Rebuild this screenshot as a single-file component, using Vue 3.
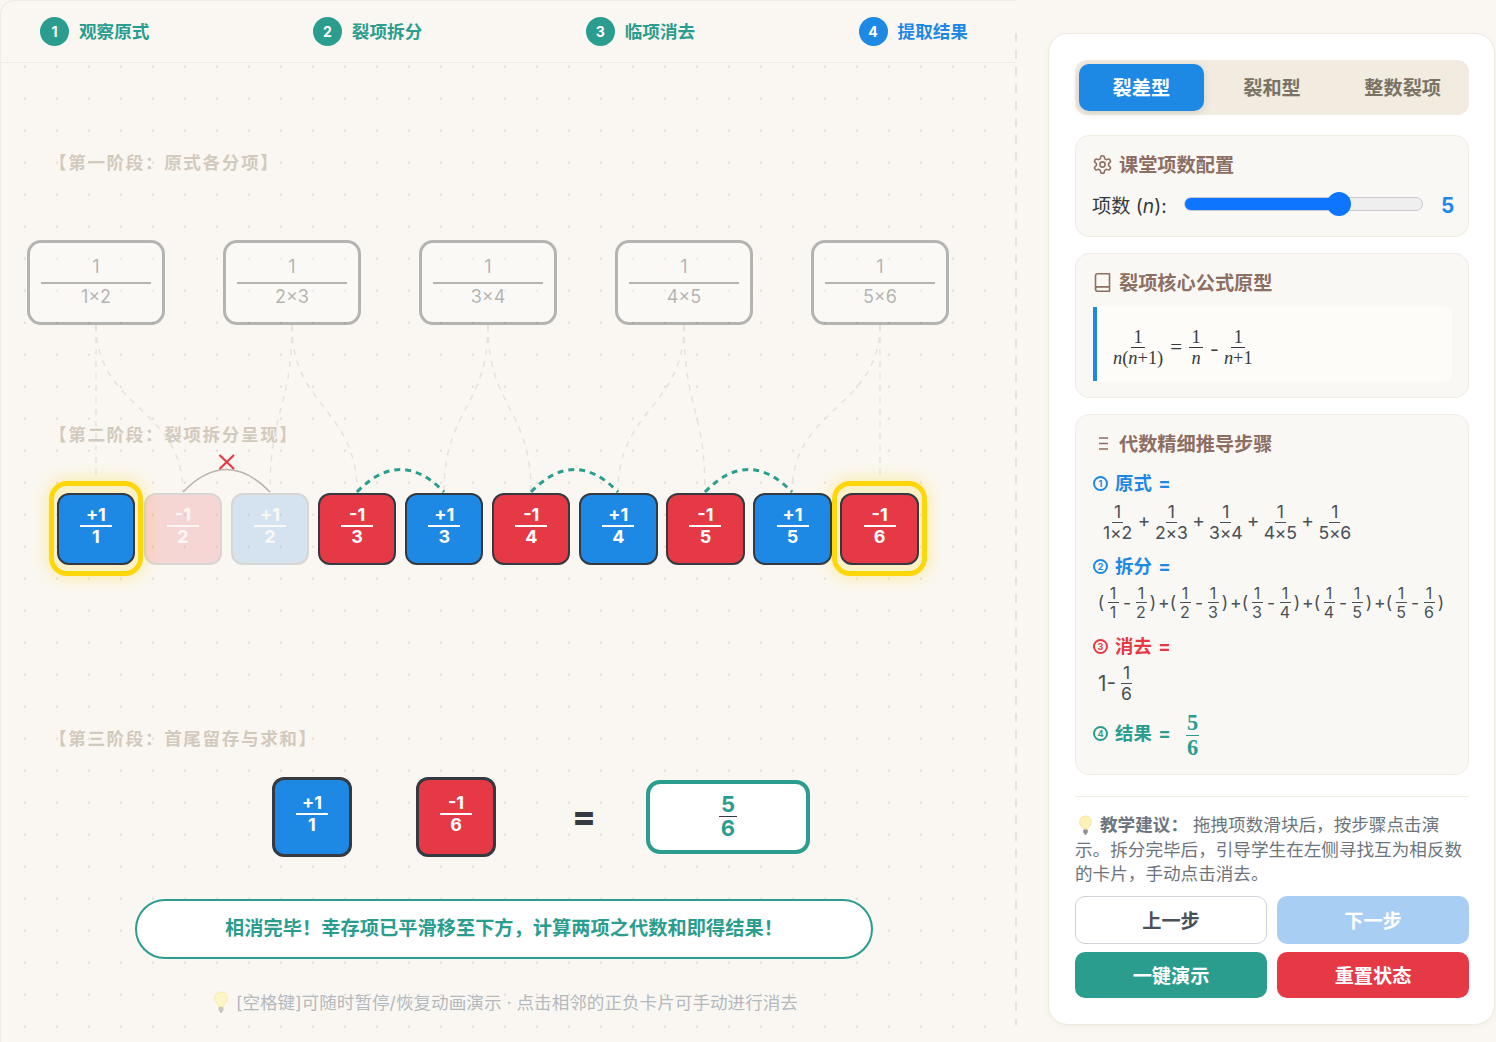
<script setup>
import { ref, computed } from 'vue'

const steps = [
  { n: 1, label: '观察原式' },
  { n: 2, label: '裂项拆分' },
  { n: 3, label: '临项消去' },
  { n: 4, label: '提取结果', current: true }
]
const terms = ['1×2', '2×3', '3×4', '4×5', '5×6']
const cards = [
  { s: '+1', d: 1, kind: 'pos', keep: true },
  { s: '-1', d: 2, kind: 'neg', faded: true },
  { s: '+1', d: 2, kind: 'pos', faded: true },
  { s: '-1', d: 3, kind: 'neg' },
  { s: '+1', d: 3, kind: 'pos' },
  { s: '-1', d: 4, kind: 'neg' },
  { s: '+1', d: 4, kind: 'pos' },
  { s: '-1', d: 5, kind: 'neg' },
  { s: '+1', d: 5, kind: 'pos' },
  { s: '-1', d: 6, kind: 'neg', keep: true }
]
const pairs = [[1, 2], [2, 3], [3, 4], [4, 5], [5, 6]]
const tabs = ['裂差型', '裂和型', '整数裂项']

const thinLines = [
  'M96 325 V492',
  'M96 325 C96 408 183 408 183 492',
  'M292 325 C292 408 270 408 270 492',
  'M292 325 C292 408 357 408 357 492',
  'M488 325 C488 408 444 408 444 492',
  'M488 325 C488 408 531 408 531 492',
  'M684 325 C684 408 618 408 618 492',
  'M684 325 C684 408 705 408 705 492',
  'M880 325 C880 408 792 408 792 492',
  'M880 325 V492'
]
const tealArcs = [
  'M357 492 Q400.500 447 444 492',
  'M531 492 Q574.500 447 618 492',
  'M705 492 Q748.500 447 792 492'
]

const n = ref(5)
const fill = computed(() => 12 + 215 * ((n.value - 3) / 3) + 'px')
</script>

<template>
  <div class="app">
    <main class="stage">
      <nav class="stepper">
        <div v-for="s in steps" :key="s.n" class="step" :class="{ current: s.current }">
          <span class="dot">{{ s.n }}</span>
          <span class="step-label">{{ s.label }}</span>
        </div>
      </nav>

      <section class="canvas">
        <svg class="wires" viewBox="0 0 1016 1042" width="1016" height="1042" fill="none">
          <path v-for="d in thinLines" :key="d" :d="d" stroke="#e7e2d9" stroke-width="1.500" stroke-dasharray="6 6" />
          <path d="M183 492 Q226.500 447 270 492" stroke="#bab4a9" stroke-width="1.500" />
          <path d="M219.500 455 L234 469 M234 455 L219.500 469" stroke="#e63946" stroke-width="2.200" />
          <path v-for="d in tealArcs" :key="d" :d="d" stroke="#2a9d8f" stroke-width="3" stroke-dasharray="6 5" />
        </svg>

        <h3 class="phase first">【第一阶段：原式各分项】</h3>
        <div class="origin-row">
          <div v-for="t in terms" :key="t" class="origin-card">
            <span class="o-num">1</span>
            <i class="o-bar"></i>
            <span class="o-den">{{ t }}</span>
          </div>
        </div>

        <h3 class="phase second">【第二阶段：裂项拆分呈现】</h3>
        <div class="split-row">
          <div
            v-for="(c, i) in cards"
            :key="i"
            class="term"
            :class="[c.kind, { keep: c.keep }]"
          >
            <div class="term-body" :class="{ faded: c.faded }">
              <span>{{ c.s }}</span>
              <i></i>
              <span>{{ c.d }}</span>
            </div>
          </div>
        </div>

        <h3 class="phase third">【第三阶段：首尾留存与求和】</h3>
        <div class="sum-row">
          <div class="term big pos">
            <div class="term-body"><span>+1</span><i></i><span>1</span></div>
          </div>
          <div class="term big neg">
            <div class="term-body"><span>-1</span><i></i><span>6</span></div>
          </div>
          <div class="equals">=</div>
          <div class="result">
            <span>5</span>
            <i></i>
            <span>6</span>
          </div>
        </div>

        <div class="message">相消完毕！幸存项已平滑移至下方，计算两项之代数和即得结果！</div>

        <div class="hint">
          <svg class="bulb" viewBox="0 0 16 22" width="16" height="22">
            <path d="M8 1a6.500 6.500 0 0 0-4 11.600c1 .9 1.500 1.900 1.500 3h5c0-1.100.5-2.100 1.500-3A6.500 6.500 0 0 0 8 1z" fill="#fdf5c8" stroke="#f8e9a6" stroke-width=".9" />
            <rect x="5.500" y="16" width="5" height="4" rx="1" fill="#c9c9c4" />
            <rect x="6.500" y="20" width="3" height="1.500" rx=".7" fill="#b5b5b0" />
          </svg>
          <span>[空格键]可随时暂停/恢复动画演示 · 点击相邻的正负卡片可手动进行消去</span>
        </div>
      </section>
    </main>

    <aside class="panel">
      <div class="tabs">
        <button v-for="(t, i) in tabs" :key="t" class="tab" :class="{ active: i === 0 }">{{ t }}</button>
      </div>

      <section class="box config">
        <h4 class="box-title">
          <svg class="ico" viewBox="0 0 24 24" width="21" height="21" fill="none" stroke="#8d6e63" stroke-width="1.800" stroke-linecap="round" stroke-linejoin="round">
            <path d="M12.220 2h-.44a2 2 0 0 0-2 2v.18a2 2 0 0 1-1 1.730l-.43.25a2 2 0 0 1-2 0l-.15-.08a2 2 0 0 0-2.730.73l-.22.38a2 2 0 0 0 .73 2.730l.15.1a2 2 0 0 1 1 1.720v.51a2 2 0 0 1-1 1.740l-.15.09a2 2 0 0 0-.73 2.730l.22.38a2 2 0 0 0 2.730.73l.15-.08a2 2 0 0 1 2 0l.43.25a2 2 0 0 1 1 1.730V20a2 2 0 0 0 2 2h.44a2 2 0 0 0 2-2v-.18a2 2 0 0 1 1-1.730l.43-.25a2 2 0 0 1 2 0l.15.08a2 2 0 0 0 2.730-.73l.22-.39a2 2 0 0 0-.73-2.730l-.15-.08a2 2 0 0 1-1-1.740v-.5a2 2 0 0 1 1-1.740l.15-.09a2 2 0 0 0 .73-2.730l-.22-.38a2 2 0 0 0-2.730-.73l-.15.08a2 2 0 0 1-2 0l-.43-.25a2 2 0 0 1-1-1.730V4a2 2 0 0 0-2-2z" />
            <circle cx="12" cy="12" r="3" />
          </svg>
          <span>课堂项数配置</span>
        </h4>
        <div class="slider-row">
          <label class="slider-label">项数 (<em>n</em>):</label>
          <input v-model.number="n" class="slider" type="range" min="3" max="6" step="1" :style="{ '--fill': fill }" />
          <span class="slider-value">{{ n }}</span>
        </div>
      </section>

      <section class="box proto">
        <h4 class="box-title">
          <svg class="ico" viewBox="0 0 24 24" width="21" height="21" fill="none" stroke="#8d6e63" stroke-width="1.800" stroke-linecap="round" stroke-linejoin="round">
            <path d="M4 19.500v-15A2.500 2.500 0 0 1 6.500 2H20v20H6.500a2.500 2.500 0 0 1 0-5H20" />
          </svg>
          <span>裂项核心公式原型</span>
        </h4>
        <div class="formula">
          <span class="sf"><span>1</span><i></i><span><em>n</em>(<em>n</em>+1)</span></span>
          <span class="op eq">=</span>
          <span class="sf"><span>1</span><i></i><span><em>n</em></span></span>
          <span class="op minus">-</span>
          <span class="sf"><span>1</span><i></i><span><em>n</em>+1</span></span>
        </div>
      </section>

      <section class="box derive">
        <h4 class="box-title">
          <svg class="ico" viewBox="0 0 21 21" width="21" height="21" fill="none" stroke="#8d6e63" stroke-width="1.500">
            <path d="M7 5h9M7 10.500h9M7 16h9" />
          </svg>
          <span>代数精细推导步骤</span>
        </h4>

        <div class="d-head blue"><span class="cn">1</span>原式 =</div>
        <div class="d-origin">
          <template v-for="(t, i) in terms" :key="t">
            <span v-if="i" class="plus">+</span>
            <span class="mf wide"><span>1</span><i></i><span>{{ t }}</span></span>
          </template>
        </div>

        <div class="d-head blue second-head"><span class="cn">2</span>拆分 =</div>
        <div class="d-split">
          <template v-for="(p, i) in pairs" :key="i">
            <span v-if="i" class="sp-plus">+</span>
            <span class="paren">(</span>
            <span class="mf small"><span>1</span><i></i><span>{{ p[0] }}</span></span>
            <span class="sp-minus">-</span>
            <span class="mf small"><span>1</span><i></i><span>{{ p[1] }}</span></span>
            <span class="paren">)</span>
          </template>
        </div>

        <div class="d-head red third-head"><span class="cn">3</span>消去 =</div>
        <div class="d-cancel">
          <span class="lead">1-</span>
          <span class="mf"><span>1</span><i></i><span>6</span></span>
        </div>

        <div class="d-result">
          <div class="d-head teal"><span class="cn">4</span>结果 =</div>
          <span class="rf"><span>5</span><i></i><span>6</span></span>
        </div>
      </section>

      <div class="advice">
        <svg class="bulb in-text" viewBox="0 0 16 22" width="15" height="20">
          <path d="M8 1a6.500 6.500 0 0 0-4 11.600c1 .9 1.500 1.900 1.500 3h5c0-1.100.5-2.100 1.500-3A6.500 6.500 0 0 0 8 1z" fill="#fdf2b8" stroke="#f8e28e" stroke-width=".9" />
          <rect x="5.500" y="16" width="5" height="4" rx="1" fill="#8f918f" />
          <rect x="6.500" y="20" width="3" height="1.500" rx=".7" fill="#777" />
        </svg>
        <strong>教学建议：</strong> 拖拽项数滑块后，按步骤点击演示。拆分完毕后，引导学生在左侧寻找互为相反数的卡片，手动点击消去。
      </div>

      <div class="actions">
        <button class="btn ghost">上一步</button>
        <button class="btn next">下一步</button>
        <button class="btn run">一键演示</button>
        <button class="btn reset">重置状态</button>
      </div>
    </aside>
  </div>
</template>

<style scoped>
.app {
  display: flex;
  width: 1496px;
  height: 1042px;
  overflow: hidden;
  background: #faf7f2;
  font-family: Inter, "Noto Sans CJK SC", sans-serif;
  color: #343a40;
}

/* ---------- left stage ---------- */
.stage {
  position: relative;
  width: 1016px;
  flex: none;
  border-radius: 14px 0 0 0;
  box-shadow: inset 1px 1px 0 #f0ece4;
}
.stage::after {
  content: "";
  position: absolute;
  top: 33px;
  bottom: 17px;
  right: -1px;
  width: 2px;
  background: repeating-linear-gradient(to bottom, #e8e2d8 0 9px, transparent 9px 17px);
}
.stepper {
  display: flex;
  justify-content: space-between;
  align-items: center;
  box-sizing: border-box;
  height: 63px;
  padding: 0 48px 0 40px;
  border-bottom: 1px solid #f0ece4;
}
.step {
  display: flex;
  align-items: center;
  gap: 10px;
  color: #2a9d8f;
}
.step.current { color: #1e88e5; }
.dot {
  display: flex;
  align-items: center;
  justify-content: center;
  width: 29px;
  height: 29px;
  border-radius: 50%;
  color: #fff;
  background: #2a9d8f;
  font-size: 14px;
  font-weight: 700;
}
.step.current .dot { background: #1e88e5; }
.step-label { padding-top: 2px; font-size: 17.600px; font-weight: 700; line-height: 24px; }

.canvas {
  position: relative;
  height: 979px;
  background-image: radial-gradient(circle, #e5dfd5 1.200px, transparent 1.600px);
  background-size: 32px 32px;
  background-position: 9px -12.300px;
}
.wires {
  position: absolute;
  left: 0;
  top: -63px;
  pointer-events: none;
}
.phase {
  margin: 0 0 0 49px;
  font-size: 17.600px;
  line-height: 24px;
  font-weight: 700;
  letter-spacing: 1.600px;
  color: #d2cabe;
}
.phase.first { padding-top: 88px; }
.phase.second { margin-top: 98px; }
.phase.third { margin-top: 162px; }

.origin-row {
  display: flex;
  gap: 57.400px;
  margin: 65px 0 0 26.700px;
}
.origin-card {
  position: relative;
  display: flex;
  flex-direction: column;
  align-items: center;
  justify-content: center;
  box-sizing: border-box;
  width: 138.600px;
  height: 85px;
  padding-bottom: 2px;
  border: 3.500px solid #343a40;
  border-radius: 14px;
  background: #fff;
  opacity: .35;
  font-size: 18px;
  color: #343a40;
}
.o-num { line-height: 24px; margin-bottom: 3px; }
.o-bar { display: block; flex: none; width: 110px; height: 2px; background: #343a40; }
.o-den { line-height: 24px; margin-top: 1px; }

.split-row {
  position: relative;
  z-index: 1;
  isolation: isolate;
  display: flex;
  gap: 8.700px;
  margin: 45.700px 0 0 56.700px;
}
.term {
  position: relative;
  width: 78.400px;
  height: 72.300px;
  flex: none;
}
.term.big { width: 80px; height: 80px; }
.term-body {
  display: flex;
  flex-direction: column;
  align-items: center;
  justify-content: center;
  box-sizing: border-box;
  width: 100%;
  height: 100%;
  padding-bottom: 6px;
  border: 2.500px solid #343a40;
  border-radius: 12px;
  color: #fff;
  font-size: 18px;
  font-weight: 700;
}
.term.big .term-body { border-width: 3px; }
.term-body span { line-height: 20px; }
.term-body i { display: block; width: 32px; height: 2px; background: #fff; }
.term.pos .term-body { background: #1e88e5; }
.term.neg .term-body { background: #e63946; }
.term-body.faded { opacity: .17; }
.term.keep::after {
  content: "";
  position: absolute;
  left: -8px;
  right: -8px;
  top: -11.500px;
  bottom: -11px;
  box-sizing: border-box;
  border: 5px solid #ffd60a;
  border-radius: 18px;
  background: rgba(255, 214, 10, .18);
  box-shadow: 0 0 18px rgba(255, 214, 10, .4);
  z-index: -1;
}

.sum-row {
  position: relative;
  display: flex;
  align-items: center;
  margin: 26px 0 0 272px;
}
.sum-row .term { margin-right: 64px; }
.sum-row .term:nth-child(2) { margin-right: 76px; }
.equals {
  width: 20px;
  margin-right: 54px;
  padding-bottom: 2px;
  font-size: 35px;
  font-weight: 800;
  line-height: 40px;
  text-align: center;
}
.result {
  display: flex;
  flex-direction: column;
  align-items: center;
  justify-content: center;
  box-sizing: border-box;
  width: 164px;
  height: 74px;
  border: 4px solid #2a9d8f;
  border-radius: 14px;
  background: #fff;
  color: #2a9d8f;
  font-size: 22px;
  font-weight: 700;
}
.result span { line-height: 23px; }
.result i { display: block; width: 18px; height: 1px; background: #343a40; }

.message {
  position: relative;
  display: flex;
  align-items: center;
  justify-content: center;
  box-sizing: border-box;
  width: 738px;
  height: 60px;
  margin: 42px 0 0 135px;
  padding-bottom: 3px;
  border: 2.500px solid #2a9d8f;
  border-radius: 30px;
  background: #fff;
  color: #2a9d8f;
  font-size: 19.200px;
  font-weight: 700;
  letter-spacing: .05px;
}
.hint {
  position: relative;
  display: flex;
  align-items: center;
  gap: 7px;
  margin: 31px 0 0 213px;
  height: 24px;
  font-size: 17.600px;
  color: #b4b9be;
}
.bulb { flex: none; }

/* ---------- right panel ---------- */
.panel {
  box-sizing: border-box;
  flex: none;
  width: 447px;
  height: 992px;
  margin: 33px 0 0 32px;
  padding: 26px 25px 26px 26px;
  background: #fff;
  border: 1px solid #efe9df;
  border-radius: 20px;
  box-shadow: 0 2px 6px rgba(140, 120, 90, .06);
}
.tabs {
  display: flex;
  gap: 6px;
  box-sizing: border-box;
  height: 55px;
  padding: 4px;
  border-radius: 12px;
  background: #f1ebe0;
}
.tab {
  flex: 1;
  height: 47px;
  padding-bottom: 2px;
  border: 0;
  border-radius: 10px;
  background: transparent;
  color: #7a7365;
  font: 700 19.200px Inter, "Noto Sans CJK SC", sans-serif;
}
.tab.active {
  background: #1e88e5;
  color: #fff;
  box-shadow: 0 2px 8px rgba(0, 0, 0, .12);
}
.box {
  box-sizing: border-box;
  padding: 16px 16px 0;
  border: 1px solid #f1ece4;
  border-radius: 14px;
  background: #faf8f4;
}
.config { height: 102px; margin-top: 20px; }
.proto { height: 145px; margin-top: 16px; }
.derive { height: 361px; margin-top: 16px; }
.box-title {
  display: flex;
  align-items: center;
  gap: 6px;
  margin: 0;
  height: 24px;
  font-size: 19.200px;
  font-weight: 700;
  color: #8d6e63;
}
.ico { flex: none; }
.slider-row {
  display: flex;
  align-items: center;
  margin-top: 14px;
  height: 30px;
}
.slider-label { flex: none; width: 92px; font-size: 19.200px; color: #343a40; white-space: nowrap; }
.slider-label em { font-style: italic; }
.slider {
  -webkit-appearance: none;
  appearance: none;
  flex: none;
  width: 239px;
  height: 24px;
  margin: -2px 0 0;
  background: transparent;
}
.slider::-webkit-slider-runnable-track {
  height: 14px;
  box-sizing: border-box;
  border: 1px solid #c9c9c9;
  border-radius: 7px;
  background: linear-gradient(to right, #0d75ff var(--fill), #efefef var(--fill));
}
.slider::-webkit-slider-thumb {
  -webkit-appearance: none;
  width: 24px;
  height: 24px;
  margin-top: -6px;
  border-radius: 50%;
  background: #0d75ff;
}
.slider-value {
  margin-left: 18px;
  font-size: 20.800px;
  font-weight: 700;
  color: #1e88e5;
}

.formula {
  display: flex;
  align-items: center;
  box-sizing: border-box;
  width: 359px;
  height: 74px;
  margin: 13px 0 0 1px;
  padding: 6px 0 0 16px;
  border-left: 4px solid #1e88e5;
  border-radius: 0 8px 8px 0;
  background: #fdfcf9;
  font-family: "Liberation Serif", serif;
  font-size: 18.400px;
  color: #343a40;
}
.sf {
  display: inline-flex;
  flex-direction: column;
  align-items: center;
}
.sf span { line-height: 20px; white-space: nowrap; }
.sf i { display: block; width: 14px; height: 1px; background: #343a40; }
.formula .op { display: block; line-height: 20px; }
.formula .eq { margin: 0 7px 0 7px; font-size: 21px; }
.formula .minus { margin: 3px 5px 0 7px; font-family: Inter, sans-serif; font-size: 19.200px; }

.derive .box-title { margin-bottom: 16px; }
.d-head {
  display: flex;
  align-items: center;
  margin-left: 1px;
  font-size: 18.400px;
  font-weight: 700;
  line-height: 24px;
  white-space: pre;
  word-spacing: 2px;
}
.cn {
  display: inline-flex;
  align-items: center;
  justify-content: center;
  box-sizing: border-box;
  width: 15px;
  height: 15px;
  margin-right: 7px;
  border: 2px solid currentColor;
  border-radius: 50%;
  font-size: 9px;
  line-height: 1;
}
.blue { color: #1e88e5; }
.red { color: #e63946; }
.teal { color: #2a9d8f; }
.second-head { margin-top: 11px; }
.third-head { margin-top: 13px; }
.mf {
  display: inline-flex;
  flex-direction: column;
  align-items: center;
  flex: none;
  font-size: 17.600px;
  color: #495057;
}
.mf span { line-height: 20px; white-space: nowrap; }
.mf i { display: block; width: 11px; height: 1px; background: #495057; }
.mf.wide { width: 30.500px; letter-spacing: -.2px; }
.mf.wide:first-child { width: 29px; }
.mf.small { width: 14px; font-size: 16px; }
.mf.small span { line-height: 18px; }
.d-origin {
  display: flex;
  align-items: center;
  margin: 7px 0 0 11px;
  color: #495057;
}
.plus { flex: none; width: 24px; margin-bottom: 5px; text-align: center; font-size: 19.200px; line-height: 20px; }
.d-split {
  display: flex;
  align-items: center;
  margin: 6px 0 0 4px;
  font-size: 17.600px;
  color: #495057;
}
.paren { width: 10px; text-align: center; flex: none; line-height: 18px; }
.sp-plus { width: 10px; text-align: center; flex: none; line-height: 18px; }
.sp-minus { width: 14px; text-align: center; flex: none; line-height: 18px; }
.d-cancel {
  display: flex;
  align-items: center;
  margin: 5px 0 0 6px;
  color: #495057;
}
.lead { font-size: 20.800px; width: 23px; line-height: 20px; }
.d-result {
  display: flex;
  align-items: center;
  margin-top: 7px;
}
.d-result .d-head { margin-bottom: 5px; }
.rf {
  display: inline-flex;
  flex-direction: column;
  align-items: center;
  width: 20px;
  margin-left: 12px;
  font: 700 22.400px "Liberation Serif", serif;
  color: #2a9d8f;
}
.rf span { line-height: 24px; }
.rf i { display: block; width: 13px; height: 1px; background: #2a9d8f; }

.advice {
  margin-top: 21px;
  padding-top: 16px;
  border-top: 1px solid #f1ebe1;
  font-size: 17.600px;
  line-height: 24.600px;
  color: #6c757d;
}
.advice strong { font-weight: 700; }
.in-text { vertical-align: -4px; margin: 0 7px 0 3px; }
.actions {
  display: grid;
  grid-template-columns: 1fr 1fr;
  grid-template-rows: 48px 46px;
  gap: 8px 10px;
  margin-top: 9px;
}
.btn {
  border: 0;
  border-radius: 10px;
  color: #fff;
  font: 700 19.200px Inter, "Noto Sans CJK SC", sans-serif;
}
.btn.ghost { background: #fff; border: 1px solid #ced4da; color: #495057; }
.btn.next { background: #a9cef4; }
.btn.run { background: #2a9d8f; }
.btn.reset { background: #e63946; }
</style>

<style>
html, body { background: #faf7f2; }
</style>
